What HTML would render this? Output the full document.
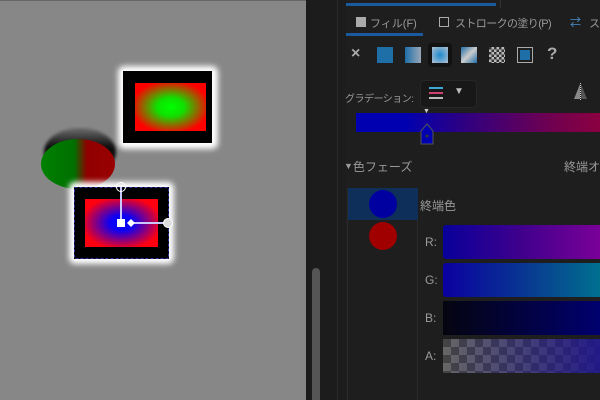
<!DOCTYPE html>
<html><head><meta charset="utf-8"><style>
*{margin:0;padding:0;box-sizing:border-box}
html,body{width:600px;height:400px;overflow:hidden}
body{background:#1c1c1c;position:relative;font-family:"Liberation Sans","Noto Sans CJK JP",sans-serif;color:#9a9a9a;font-size:12px}
.a{position:absolute}
.t{position:absolute;white-space:nowrap}
</style></head><body>
<div class="a" style="left:0;top:0;width:306px;height:400px;background:#878787"></div>
<div class="a" style="left:0;top:0;width:306px;height:1px;background:#666"></div>
<svg class="a" style="left:0;top:0" width="306" height="400">
<defs>
<radialGradient id="g1" cx="50%" cy="50%" r="55%"><stop offset="0" stop-color="#00ff00"/><stop offset="0.35" stop-color="#10e000"/><stop offset="1" stop-color="#ff0000"/></radialGradient>
<radialGradient id="g2" cx="50%" cy="50%" r="55%"><stop offset="0" stop-color="#0000ff"/><stop offset="0.3" stop-color="#1000f0"/><stop offset="1" stop-color="#ff0010"/></radialGradient>
<linearGradient id="g3" x1="0" x2="1"><stop offset="0" stop-color="#008000"/><stop offset="0.45" stop-color="#007000"/><stop offset="0.62" stop-color="#900000"/><stop offset="1" stop-color="#9a0000"/></linearGradient>
<linearGradient id="g4" x1="0" y1="0" x2="0" y2="1"><stop offset="0" stop-color="#000" stop-opacity="0.2"/><stop offset="0.4" stop-color="#000" stop-opacity="0.9"/><stop offset="1" stop-color="#000"/></linearGradient>
<filter id="gl" x="-30%" y="-30%" width="160%" height="160%"><feGaussianBlur stdDeviation="3"/></filter>
<filter id="sh"><feGaussianBlur stdDeviation="1.5"/></filter>
</defs>
<rect x="118" y="66" width="100" height="83" rx="6" fill="#fff" filter="url(#gl)"/>
<rect x="123" y="71" width="89" height="72" fill="#000"/>
<rect x="135" y="83" width="71" height="48" fill="url(#g1)"/>
<ellipse cx="80" cy="152" rx="36" ry="24" fill="url(#g4)" filter="url(#sh)"/>
<ellipse cx="78" cy="164" rx="37" ry="25" fill="url(#g3)"/>
<rect x="69" y="182" width="105" height="82" rx="6" fill="#fff" filter="url(#gl)"/>
<rect x="74" y="187" width="95" height="72" fill="#000"/>
<rect x="74.5" y="187.5" width="94" height="71" fill="none" stroke="#3030a0" stroke-dasharray="3,2"/>
<rect x="85" y="199" width="73" height="48" fill="url(#g2)"/>
<line x1="121" y1="187" x2="121" y2="222" stroke="#c8c8ff" stroke-width="2"/>
<line x1="130" y1="223" x2="168" y2="223" stroke="#c8c8ff" stroke-width="2"/>
<circle cx="121" cy="187" r="4.5" fill="none" stroke="#fff"/>
<circle cx="168" cy="223" r="4.5" fill="#ddd" stroke="#fff"/>
<rect x="117" y="219" width="8" height="8" fill="#fff"/>
<path d="M127 223 L131 219 L135 223 L131 227Z" fill="#fff"/>
</svg>
<div class="a" style="left:312px;top:268px;width:8px;height:132px;background:#555;border-radius:4px 4px 0 0"></div>
<div class="a" style="left:337px;top:0;width:1px;height:400px;background:#2a2a2a"></div>
<div class="a" style="left:345px;top:0;width:255px;height:400px;background:#1e1e1e"></div>
<div class="a" style="left:346px;top:3px;width:150px;height:3px;background:#1c5aa0"></div>
<div class="a" style="left:500px;top:0;width:1px;height:8px;background:#333"></div>
<div class="a" style="left:356px;top:17px;width:10px;height:10px;background:#aaa"></div>
<div class="t" style="left:370px;top:15px;font-size:11px">フィル(F)</div>
<div class="a" style="left:346px;top:33px;width:77px;height:3px;background:#1c5aa0"></div>
<div class="a" style="left:439px;top:17px;width:10px;height:10px;border:1px solid #aaa"></div>
<div class="t" style="left:455px;top:15px;font-size:11px;letter-spacing:-0.6px">ストロークの塗り(P)</div>
<div class="t" style="left:570px;top:14px;color:#4a90d0;font-size:11px">⇄</div>
<div class="t" style="left:589px;top:15px;font-size:11px">ス</div>
<div class="t" style="left:351px;top:45px;font-size:16px;font-weight:bold;color:#aaa">×</div>
<div class="a" style="left:377px;top:47px;width:16px;height:16px;background:#1e6ea8"></div>
<div class="a" style="left:405px;top:47px;width:16px;height:16px;background:linear-gradient(90deg,#1e6ea8,#9aa8b8)"></div>
<div class="a" style="left:428px;top:43px;width:24px;height:24px;background:#121212;border-radius:3px"></div>
<div class="a" style="left:432px;top:47px;width:16px;height:16px;background:radial-gradient(circle,#1e8ad0,#b0c0d0)"></div>
<div class="a" style="left:461px;top:47px;width:16px;height:16px;background:linear-gradient(135deg,#1e6ea8,#ccc,#1e6ea8)"></div>
<div class="a" style="left:489px;top:47px;width:16px;height:16px;background:repeating-conic-gradient(#bbb 0 25%,#333 0 50%) 0 0/5px 5px"></div>
<div class="a" style="left:517px;top:47px;width:16px;height:16px;border:1px solid #aaa;padding:2px"><div style="width:100%;height:100%;background:#1e6ea8"></div></div>
<div class="t" style="left:547px;top:44px;font-size:17px;font-weight:bold;color:#aaa">?</div>
<div class="t" style="left:345px;top:90px;font-size:10px;letter-spacing:-0.5px">グラデーション:</div>
<div class="a" style="left:420px;top:80px;width:57px;height:28px;background:#181818;border-radius:4px;border:1px solid #262626"></div>
<div class="a" style="left:429px;top:87px;width:14px;height:2px;background:#40a8d8"></div>
<div class="a" style="left:429px;top:92px;width:14px;height:2px;background:#d04070"></div>
<div class="a" style="left:429px;top:97px;width:14px;height:2px;background:#bbb"></div>
<div class="t" style="left:454px;top:86px;font-size:10px;color:#bbb">▼</div>
<svg class="a" style="left:572px;top:82px" width="16" height="20"><path d="M8 2 L2 17 L8 17Z" fill="#888"/><path d="M9 2 L15 17 L9 17Z" fill="#555"/><line x1="8.5" y1="1" x2="8.5" y2="19" stroke="#ccc" stroke-dasharray="1,1"/></svg>
<div class="a" style="left:356px;top:113px;width:244px;height:19px;background:linear-gradient(90deg,#0000b0 0%,#0000b0 20%,#300080 45%,#700050 80%,#8a0040 100%)"></div>
<div class="t" style="left:423px;top:108px;font-size:7px;color:#ccc">▼</div>
<svg class="a" style="left:419px;top:122px" width="16" height="24"><path d="M8 2 L14 9 L14 22 L2 22 L2 9Z" fill="#0000b0" stroke="#555"/><circle cx="8" cy="14" r="1.5" fill="#333"/></svg>
<div class="t" style="left:344px;top:158px;font-size:12px"><span style="font-size:9px;vertical-align:2px">▼</span>色フェーズ</div>
<div class="t" style="left:564px;top:158px;font-size:12px">終端オ</div>
<div class="a" style="left:347px;top:188px;width:71px;height:212px;border-left:1px solid #2a2a2a;border-right:1px solid #2a2a2a"></div>
<div class="a" style="left:348px;top:188px;width:70px;height:32px;background:#0d2f5a"></div>
<div class="a" style="left:369px;top:190px;width:28px;height:28px;border-radius:50%;background:#0000a0"></div>
<div class="a" style="left:369px;top:222px;width:28px;height:28px;border-radius:50%;background:#a00000"></div>
<div class="t" style="left:420px;top:197px;font-size:12px">終端色</div>
<div class="t" style="left:425px;top:235px;font-size:12px">R:</div>
<div class="t" style="left:425px;top:273px;font-size:12px">G:</div>
<div class="t" style="left:425px;top:311px;font-size:12px">B:</div>
<div class="t" style="left:425px;top:349px;font-size:12px">A:</div>
<div class="a" style="left:443px;top:225px;width:157px;height:34px;background:linear-gradient(90deg,#08009a,#40008c 50%,#7a0098);border-radius:3px 0 0 3px"></div>
<div class="a" style="left:443px;top:263px;width:157px;height:34px;background:linear-gradient(90deg,#0a00a0,#084090 60%,#007090);border-radius:3px 0 0 3px"></div>
<div class="a" style="left:443px;top:301px;width:157px;height:34px;background:linear-gradient(90deg,#050510,#020240 50%,#00006e)"></div>
<div class="a" style="left:443px;top:339px;width:157px;height:34px;background:linear-gradient(90deg,rgba(40,30,140,0),rgba(30,20,140,.9)),repeating-conic-gradient(#666 0 25%,#444 0 50%) 0 0/16px 16px"></div>
</body></html>
